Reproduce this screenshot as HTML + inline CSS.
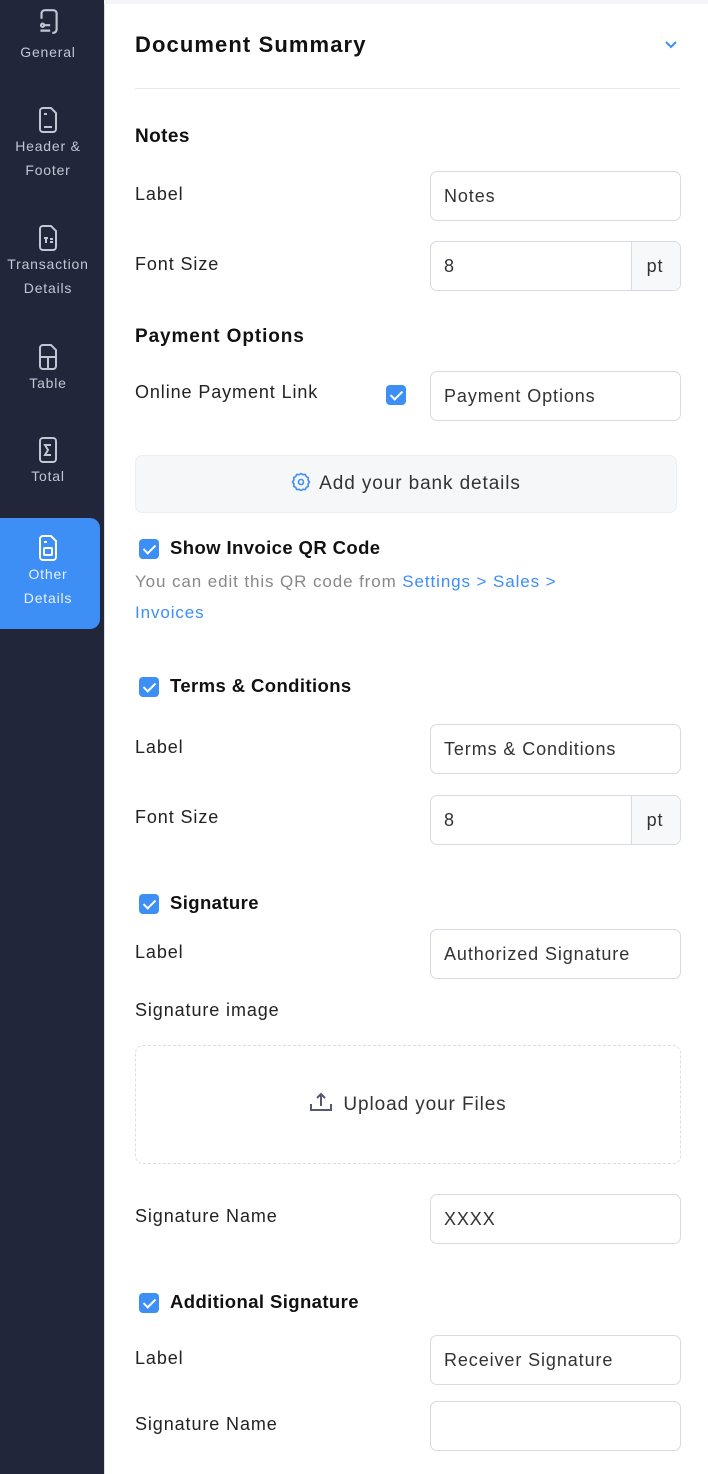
<!DOCTYPE html>
<html><head><meta charset="utf-8"><style>
*{margin:0;padding:0;box-sizing:border-box}
body{width:708px;height:1474px;overflow:hidden;background:#fff;font-family:"Liberation Sans",sans-serif;position:relative;color:#222;letter-spacing:0.9px}
.sb{position:absolute;left:0;top:0;width:104px;height:1474px;background:#21263a}
.it{position:absolute;left:0;width:96px;text-align:center;color:#c2c6d3;font-size:14px;line-height:24px;letter-spacing:0.8px}
.it svg{display:block;margin:0 auto}
.act{position:absolute;left:0;top:518px;width:100px;height:111px;background:#3d8ef5;border-radius:0 10px 10px 0}
.main{position:absolute;left:104px;top:0;right:0;bottom:0;border-left:1px solid #dcdde3}
.topbar{position:absolute;left:104px;top:0;right:0;height:4px;background:#f4f5f8}
.a{position:absolute;white-space:nowrap}
.lbl{font-size:18px;color:#222;left:135px}
.h{font-size:19px;font-weight:bold;color:#111;left:135px;letter-spacing:0.4px}
.in{position:absolute;left:430px;width:251px;height:50px;border:1px solid #d9dbe3;border-radius:7px;font-size:18px;color:#333;padding-left:13px;line-height:48px;background:#fff}
.pt{position:absolute;right:0;top:0;width:49px;height:48px;border-left:1px solid #d9dbe3;background:#f7f8fa;border-radius:0 7px 7px 0;text-align:center;padding-right:2px}
.cb{position:absolute;width:20px;height:20px;background:#3d8ef5;border-radius:4px}
.cb:after{content:"";position:absolute;left:7px;top:3px;width:5px;height:10px;border:solid #fff;border-width:0 2px 2px 0;transform:rotate(45deg)}
</style></head><body>
<div class="sb">
<div class="act"></div>
<div class="it" style="top:8px"><svg width="24" height="28" viewBox="0 0 22 26" fill="none" stroke="#c2c6d3" stroke-width="2"><path d="M5 10V5a3 3 0 0 1 3-3h8a3 3 0 0 1 3 3v15a3 3 0 0 1-3 3h-1"/><circle cx="6" cy="16" r="1.5"/><path d="M8 16h5M4 21h9"/></svg><div style="margin-top:4px">General</div></div>
<div class="it" style="top:106px"><svg width="24" height="28" viewBox="0 0 22 28" fill="none" stroke="#c2c6d3" stroke-width="2"><path d="M3 5a3 3 0 0 1 3-3h8l5 5v16a3 3 0 0 1-3 3H6a3 3 0 0 1-3-3z M7 8h3 M7 21h8"/></svg><div>Header &amp;</div><div>Footer</div></div>
<div class="it" style="top:224px"><svg width="24" height="28" viewBox="0 0 22 28" fill="none" stroke="#c2c6d3" stroke-width="2"><path d="M3 5a3 3 0 0 1 3-3h8l5 5v16a3 3 0 0 1-3 3H6a3 3 0 0 1-3-3z M7 14h4M9 14v5M13 15h3M13 18h3"/></svg><div>Transaction</div><div>Details</div></div>
<div class="it" style="top:343px"><svg width="24" height="28" viewBox="0 0 22 28" fill="none" stroke="#c2c6d3" stroke-width="2"><path d="M3 5a3 3 0 0 1 3-3h8l5 5v16a3 3 0 0 1-3 3H6a3 3 0 0 1-3-3z M3 14h16M11 14v12"/></svg><div>Table</div></div>
<div class="it" style="top:436px"><svg width="24" height="28" viewBox="0 0 22 28" fill="none" stroke="#c2c6d3" stroke-width="2"><path d="M3 5a3 3 0 0 1 3-3h10a3 3 0 0 1 3 3v18a3 3 0 0 1-3 3H6a3 3 0 0 1-3-3z M14 9H8l3 5-3 5h6"/></svg><div>Total</div></div>
<div class="it" style="top:534px;color:#e8f1ff"><svg width="24" height="28" viewBox="0 0 22 28" fill="none" stroke="#fff" stroke-width="2"><path d="M3 5a3 3 0 0 1 3-3h8l5 5v16a3 3 0 0 1-3 3H6a3 3 0 0 1-3-3z M7 8h3"/><rect x="7" y="14" width="8" height="7" rx="1"/></svg><div>Other</div><div>Details</div></div>
</div>
<div class="main"></div>
<div class="topbar"></div>

<div class="a" style="left:135px;top:32px;font-size:22px;font-weight:600;color:#111;letter-spacing:1.1px">Document Summary</div>
<svg class="a" style="left:664px;top:39px" width="14" height="10" viewBox="0 0 14 10" fill="none" stroke="#3d8ef5" stroke-width="2"><path d="M2 3l5 5 5-5"/></svg>
<div class="a" style="left:135px;top:88px;width:545px;height:1px;background:#e8e9ee"></div>

<div class="a h" style="top:126px">Notes</div>
<div class="a lbl" style="top:184px">Label</div>
<div class="in" style="top:171px">Notes</div>
<div class="a lbl" style="top:254px">Font Size</div>
<div class="in" style="top:241px">8<div class="pt">pt</div></div>

<div class="a h" style="top:326px;letter-spacing:0.9px">Payment Options</div>
<div class="a lbl" style="top:382px">Online Payment Link</div>
<div class="cb" style="left:386px;top:385px"></div>
<div class="in" style="top:371px">Payment Options</div>

<div class="a" style="left:135px;top:455px;width:542px;height:58px;background:#f6f7f9;border:1px solid #eceef2;border-radius:7px;text-align:center;line-height:56px;font-size:19px;color:#333">
<svg style="vertical-align:-3px;margin-right:8px" width="20" height="20" viewBox="0 0 20 20" fill="none" stroke="#3d8ef5" stroke-width="1.6"><path d="M10 1.5l2 1.2 2.3-.2 1 2 2 1.2-.3 2.3L18.5 10l-1.5 2 .3 2.3-2 1.2-1 2-2.3-.2-2 1.2-2-1.2-2.3.2-1-2-2-1.2.3-2.3L1.5 10 3 8l-.3-2.3 2-1.2 1-2 2.3.2z"/><circle cx="10" cy="10" r="2.5"/></svg>Add your bank details</div>

<div class="cb" style="left:139px;top:539px"></div>
<div class="a h" style="left:170px;top:537px;font-size:18.5px">Show Invoice QR Code</div>
<div class="a" style="left:135px;top:572px;font-size:17px;color:#888">You can edit this QR code from <span style="color:#3d8ef5">Settings &gt; Sales &gt;</span></div>
<div class="a" style="left:135px;top:603px;font-size:17px;color:#3d8ef5">Invoices</div>

<div class="cb" style="left:139px;top:677px"></div>
<div class="a h" style="left:170px;top:675px;font-size:18.5px">Terms &amp; Conditions</div>
<div class="a lbl" style="top:737px">Label</div>
<div class="in" style="top:724px">Terms &amp; Conditions</div>
<div class="a lbl" style="top:807px">Font Size</div>
<div class="in" style="top:795px">8<div class="pt">pt</div></div>

<div class="cb" style="left:139px;top:894px"></div>
<div class="a h" style="left:170px;top:892px;font-size:18.5px">Signature</div>
<div class="a lbl" style="top:942px">Label</div>
<div class="in" style="top:929px">Authorized Signature</div>
<div class="a lbl" style="top:1000px">Signature image</div>
<div class="a" style="left:135px;top:1045px;width:546px;height:119px;border:1px dashed #dcdde3;border-radius:8px;text-align:center;line-height:117px;font-size:19px;color:#333">
<svg style="vertical-align:-3px;margin-right:10px" width="24" height="22" viewBox="0 0 24 22" fill="none" stroke="#555a70" stroke-width="2"><path d="M2 13v6h20v-6M12 15V3M8 7l4-4 4 4"/></svg>Upload your Files</div>
<div class="a lbl" style="top:1206px">Signature Name</div>
<div class="in" style="top:1194px">XXXX</div>

<div class="cb" style="left:139px;top:1293px"></div>
<div class="a h" style="left:170px;top:1291px;font-size:18.5px">Additional Signature</div>
<div class="a lbl" style="top:1348px">Label</div>
<div class="in" style="top:1335px">Receiver Signature</div>
<div class="a lbl" style="top:1414px">Signature Name</div>
<div class="in" style="top:1401px"></div>
</body></html>
